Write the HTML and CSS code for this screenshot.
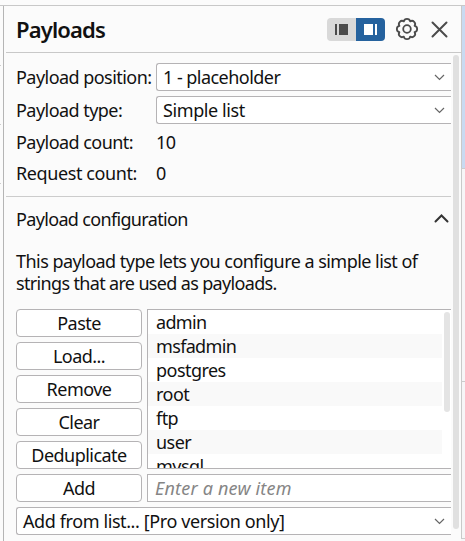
FILE: index.html
```html
<!DOCTYPE html>
<html lang="en">
<head>
<meta charset="utf-8">
<title>Payloads</title>
<link rel="stylesheet" href="styles.css">
</head>
<body>
<div class="top-strip"></div>
<div class="workspace">
  <div class="left-edge"><i></i><i></i><i></i></div>
  <main class="panel">
    <header class="header">
      <h1>Payloads</h1>
      <div class="toggle">
        <svg class="off" width="29" height="23" viewBox="0 0 29 23"><path fill="#4b4b4b" d="M8 6h2v11H8zM12 6h9v11h-9z"/></svg>
        <svg class="on" width="29" height="23" viewBox="0 0 29 23"><path fill="#fff" d="M8 6h9v11H8zM19 6h2v11h-2z"/></svg>
      </div>
      <svg class="gear" width="24" height="24" viewBox="0 0 24 24" fill="none" stroke="#4b4b4b" stroke-width="1.8" stroke-linejoin="round"><path d="M19.58 8.86A3.2 3.2 0 0 1 19.58 15.14A3.2 3.2 0 0 1 15.14 19.58A3.2 3.2 0 0 1 8.86 19.58A3.2 3.2 0 0 1 4.42 15.14A3.2 3.2 0 0 1 4.42 8.86A3.2 3.2 0 0 1 8.86 4.42A3.2 3.2 0 0 1 15.14 4.42A3.2 3.2 0 0 1 19.58 8.86Z"/><circle cx="12" cy="12" r="3.8"/></svg>
      <svg class="close" width="17" height="17" viewBox="0 0 17 17"><path d="M1.5 1.5l14 14M15.5 1.5l-14 14" stroke="#4b4b4b" stroke-width="2" stroke-linecap="round"/></svg>
    </header>
    <div class="scroll-area">
      <div class="content">
        <section class="settings">
          <div class="row"><span>Payload position:</span><div class="select"><span>1 - placeholder</span><svg class="chevron" width="11" height="7" viewBox="0 0 11 7"><path d="M1 1l4.5 4.5L10 1"/></svg></div></div>
          <div class="row"><span>Payload type:</span><div class="select"><span class="loose">Simple list</span><svg class="chevron" width="11" height="7" viewBox="0 0 11 7"><path d="M1 1l4.5 4.5L10 1"/></svg></div></div>
          <div class="row stat"><span>Payload count:</span><span>10</span></div>
          <div class="row stat"><span class="loose">Request count:</span><span>0</span></div>
        </section>
        <section class="config">
          <div class="config-head"><span class="tight">Payload configuration</span><svg width="15" height="9" viewBox="0 0 15 9"><path d="M1.5 7.5l6-6 6 6" fill="none" stroke="#333" stroke-width="2" stroke-linecap="round"/></svg></div>
          <p><span>This payload type lets you configure a simple list of</span><br><span class="tight">strings that are used as payloads.</span></p>
          <div class="editor">
            <div class="buttons">
              <div class="button">Paste</div>
              <div class="button">Load...</div>
              <div class="button">Remove</div>
              <div class="button">Clear</div>
              <div class="button">Deduplicate</div>
            </div>
            <div class="list">
              <ul><li class="tight">admin</li><li class="tight">msfadmin</li><li>postgres</li><li>root</li><li>ftp</li><li>user</li><li>mysql</li></ul>
              <div class="list-thumb"></div>
            </div>
            <div class="button">Add</div>
            <div class="input">Enter a new item</div>
          </div>
          <div class="select wide"><span class="loose">Add from list... [Pro version only]</span><svg class="chevron" width="11" height="7" viewBox="0 0 11 7"><path d="M1 1l4.5 4.5L10 1"/></svg></div>
        </section>
      </div>
      <div class="thumb"></div>
    </div>
  </main>
  <div class="right-edge"><i class="blue"></i><i class="mid"></i><i class="low"></i></div>
</div>
</body>
</html>
```
FILE: styles.css
```css
* { box-sizing: border-box; }
body {
  margin: 0;
  height: 541px;
  overflow: hidden;
  background: #fbfbfb;
  color: #111;
  font: 18px/24px "Noto Sans", sans-serif;
  letter-spacing: -0.54px;
}
svg { display: block; flex: none; }
span { white-space: nowrap; }
.tight { letter-spacing: -0.66px; }
.loose { letter-spacing: -0.4px; }
.top-strip { height: 6px; border-bottom: 1px solid #c8c8c8; }
.workspace { display: flex; height: 535px; }
.left-edge { width: 4px; border-right: 1px solid #b5b5b5; }
.left-edge i { display: block; width: 1px; height: 59px; border-bottom: 1px solid #ccc; }
.left-edge i:first-child { height: 60px; }
.panel { width: 457px; padding-left: 2px; }
.header {
  height: 47px;
  padding: 0 13px 0 10px;
  display: flex;
  align-items: center;
  border-bottom: 1px solid #c8c8c8;
}
h1 { margin: 0 auto 0 0; font-size: 22px; line-height: 30px; font-weight: 600; letter-spacing: -0.85px; }
.toggle { display: flex; margin-right: 10px; border-radius: 4px; overflow: hidden; }
.off { background: #d9d9d9; }
.on { background: #25629e; }
.gear { margin-right: 12px; }
.scroll-area { display: flex; gap: 2px; }
.content { width: 445px; }
.thumb { width: 6px; height: 474px; margin-top: 2px; border-radius: 3px; background: #e0e0e0; }
.settings { height: 144px; padding: 10px 0 0 10px; border-bottom: 1px solid #ccc; }
.row { display: grid; grid-template-columns: 140px 1fr; height: 28px; align-items: center; margin-bottom: 5px; }
.stat { height: 26px; }
.select {
  display: flex;
  align-items: center;
  justify-content: space-between;
  height: 28px;
  padding: 0 6px;
  border: 1px solid #b5b3b5;
  border-right: 0;
  border-radius: 3px 0 0 3px;
  background: #fff;
}
.chevron path { fill: none; stroke: #666; stroke-width: 1.2; }
.config { padding-left: 10px; }
.config-head { display: flex; justify-content: space-between; align-items: center; height: 43px; padding-right: 2px; }
p { margin: 10px 0 15px; line-height: 22px; }
.editor { display: grid; grid-template-columns: 126px 304px; gap: 5px; }
.buttons { display: grid; gap: 5px; }
.button {
  height: 28px;
  border: 1px solid #b5b3b5;
  border-radius: 4px;
  background: #fff;
  text-align: center;
  line-height: 26px;
}
.list {
  display: flex;
  height: 160px;
  overflow: hidden;
  border: 1px solid #b5b3b5;
  border-right: 0;
  background: #fff;
}
ul { width: 294px; margin: 0; padding: 0; list-style: none; }
li { height: 24px; padding-left: 8px; }
li:nth-child(even) { background: #f9f9f9; }
.list-thumb { width: 6px; height: 100px; margin: 2px 0 0 2px; border-radius: 3px; background: #e4e4e4; }
.input {
  height: 28px;
  padding-left: 7px;
  border: 1px solid #b5b3b5;
  border-right: 0;
  background: #fff;
  color: #858585;
  font-style: italic;
  line-height: 26px;
  letter-spacing: 0.2px;
}
.wide { margin-top: 5px; }
.right-edge { width: 4px; background: #f7f5f7; }
.right-edge i { display: block; border-left: 1px solid #c9c9c9; border-bottom: 1px solid #ccc; }
.blue { height: 163px; background: #c9daf1; }
.mid { height: 213px; }
.low { height: 157px; }
```
